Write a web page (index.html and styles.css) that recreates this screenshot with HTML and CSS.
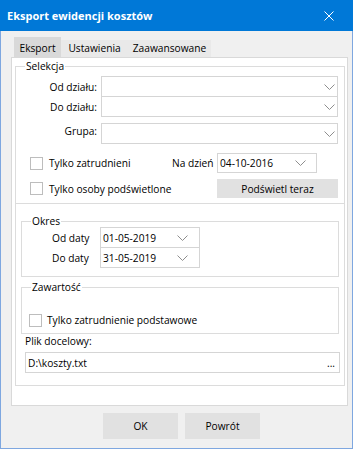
FILE: index.html
```html
<!DOCTYPE html>
<html lang="pl">
<head>
  <meta charset="UTF-8">
  <meta name="viewport" content="width=device-width, initial-scale=1.0">
  <title>Eksport ewidencji kosztów</title>
  <link rel="stylesheet" href="styles.css">
</head>
<body>
  <div class="window">
    <div class="titlebar">
      <span class="title">Eksport ewidencji kosztów</span>
      <svg class="close" width="10" height="10" viewBox="0 0 10 10">
        <path d="M0.5 0.5L9.5 9.5M9.5 0.5L0.5 9.5" stroke="#fff" stroke-width="1" fill="none"/>
      </svg>
    </div>

    <div class="client">
      <div class="tabs">
        <div class="tab tab-eksport active">Eksport</div>
        <div class="tab tab-ustawienia">Ustawienia</div>
        <div class="tab tab-zaaw">Zaawansowane</div>
      </div>

      <div class="page">
        <fieldset class="group selekcja">
          <legend>Selekcja</legend>
          <div class="fields">
            <label>Od działu:</label>
            <div class="combo">
              <svg class="chevron" width="11" height="6" viewBox="0 0 11 6"><polyline points="0.5,0.5 5.5,5.5 10.5,0.5"/></svg>
            </div>
            <label>Do działu:</label>
            <div class="combo stacked">
              <svg class="chevron" width="11" height="6" viewBox="0 0 11 6"><polyline points="0.5,0.5 5.5,5.5 10.5,0.5"/></svg>
            </div>
            <label>Grupa:</label>
            <div class="combo spaced">
              <svg class="chevron" width="11" height="6" viewBox="0 0 11 6"><polyline points="0.5,0.5 5.5,5.5 10.5,0.5"/></svg>
            </div>
          </div>

          <div class="checks">
            <div class="check"><span class="box"></span>Tylko zatrudnieni</div>
            <span class="label-day">Na dzień</span>
            <div class="date">
              <span>04-10-2016</span>
              <svg class="chevron" width="11" height="6" viewBox="0 0 11 6"><polyline points="0.5,0.5 5.5,5.5 10.5,0.5"/></svg>
            </div>
            <div class="check"><span class="box"></span>Tylko osoby podświetlone</div>
            <span></span>
            <div class="btn">Podświetl teraz</div>
          </div>
        </fieldset>

        <div class="rest">
          <fieldset class="group okres">
            <legend>Okres</legend>
            <div class="dates">
              <label>Od daty</label>
              <div class="date">
                <span>01-05-2019</span>
                <svg class="chevron" width="11" height="6" viewBox="0 0 11 6"><polyline points="0.5,0.5 5.5,5.5 10.5,0.5"/></svg>
              </div>
              <label>Do daty</label>
              <div class="date stacked">
                <span>31-05-2019</span>
                <svg class="chevron" width="11" height="6" viewBox="0 0 11 6"><polyline points="0.5,0.5 5.5,5.5 10.5,0.5"/></svg>
              </div>
            </div>
          </fieldset>

          <fieldset class="group zawartosc">
            <legend>Zawartość</legend>
            <div class="check"><span class="box"></span>Tylko zatrudnienie podstawowe</div>
          </fieldset>

          <div class="file-label">Plik docelowy:</div>
          <div class="path">
            <span>D:\koszty.txt</span>
            <span class="dots">...</span>
          </div>
        </div>
      </div>

      <div class="buttons">
        <div class="btn btn-lg">OK</div>
        <div class="btn btn-lg">Powrót</div>
      </div>
    </div>
  </div>
</body>
</html>
```

FILE: styles.css
```css
* {
  box-sizing: border-box;
}

body {
  margin: 0;
  font-family: 'Segoe UI', 'Open Sans', sans-serif;
  font-size: 10.2px;
  line-height: 14px;
  color: #000;
}

.window {
  width: 353px;
  height: 449px;
  display: flex;
  flex-direction: column;
  background-color: #f0f0f0;
}

.titlebar {
  height: 31px;
  flex: none;
  display: flex;
  align-items: center;
  justify-content: space-between;
  padding: 0 19px 0 7px;
  background-color: #0078d7;
  color: #fff;
}

.title {
  font-size: 11px;
  font-weight: 700;
}

.client {
  flex: 1;
  display: flex;
  flex-direction: column;
  border: 1px solid #7ea7e0;
  border-top: none;
}

/* tabs */
.tabs {
  display: flex;
  align-items: flex-end;
  height: 20px;
  margin: 6px 0 0 13px;
}

.tab {
  height: 17px;
  line-height: 16px;
  text-align: center;
  background-color: #e9e9e9;
}

.tab.active {
  height: 20px;
  line-height: 22px;
  background-color: #d9d9d9;
}

.tab-eksport { width: 47px; }
.tab-ustawienia { width: 67px; }
.tab-zaaw { width: 83px; }

.page {
  width: 337px;
  height: 349px;
  margin-left: 10px;
  padding: 1px 2px 0 3px;
  background-color: #fff;
  border: 1px solid #d9d9d9;
}

/* group boxes */
.group {
  margin: 0;
  padding: 0;
  min-width: 0;
  border: 1px solid #dcdcdc;
}

.group legend {
  margin-left: 9px;
  padding: 0 1px;
  line-height: 14px;
}

.selekcja .fields {
  display: grid;
  grid-template-columns: 81px minmax(0, 1fr);
  column-gap: 4px;
  align-items: center;
  margin-top: 3px;
  padding-right: 6px;
}

.selekcja label {
  text-align: right;
}

.combo {
  height: 21px;
  display: flex;
  align-items: center;
  justify-content: flex-end;
  padding-right: 2px;
  border: 1px solid #d5d5d5;
}

.combo.stacked,
.date.stacked {
  margin-top: -1px;
}

.combo.spaced {
  margin-top: 6px;
}

.chevron {
  fill: none;
  stroke: #8e8e8e;
  stroke-width: 1;
}

.checks {
  display: grid;
  grid-template-columns: minmax(0, 1fr) 45px 121px;
  grid-template-rows: 20px 19px;
  row-gap: 6px;
  align-items: center;
  margin-top: 9px;
  padding: 0 6px 5px 14px;
}

.check {
  display: flex;
  align-items: center;
  gap: 6px;
  white-space: nowrap;
}

.box {
  flex: none;
  width: 13px;
  height: 13px;
  border: 1px solid #bdbdbd;
  background-color: #fff;
}

.date {
  width: 100px;
  height: 21px;
  display: flex;
  align-items: center;
  justify-content: space-between;
  padding: 0 11px 0 2px;
  border: 1px solid #d5d5d5;
}

.checks .date {
  height: 20px;
  padding-right: 10px;
}

.btn {
  height: 19px;
  display: flex;
  align-items: center;
  justify-content: center;
  background-color: #e1e1e1;
}

.rest {
  padding: 10px 5px 12px 5px;
  border: 1px solid #dcdcdc;
  border-top: none;
}

.okres .dates {
  display: grid;
  grid-template-columns: 48px 100px;
  align-items: center;
  margin-top: -1px;
  padding: 0 0 8px 30px;
}

.zawartosc {
  margin-top: 3px;
}

.zawartosc .check {
  margin-top: 19px;
  padding: 0 0 6px 7px;
  gap: 5px;
}

.file-label {
  padding-left: 4px;
}

.path {
  height: 21px;
  margin: 4px -1px 0 4px;
  display: flex;
  align-items: center;
  justify-content: space-between;
  padding: 0 4px 0 2px;
  border: 1px solid #d5d5d5;
}

.buttons {
  display: flex;
  gap: 7px;
  margin-top: 7px;
  padding-left: 102px;
}

.btn-lg {
  width: 75px;
  height: 26px;
}
```
